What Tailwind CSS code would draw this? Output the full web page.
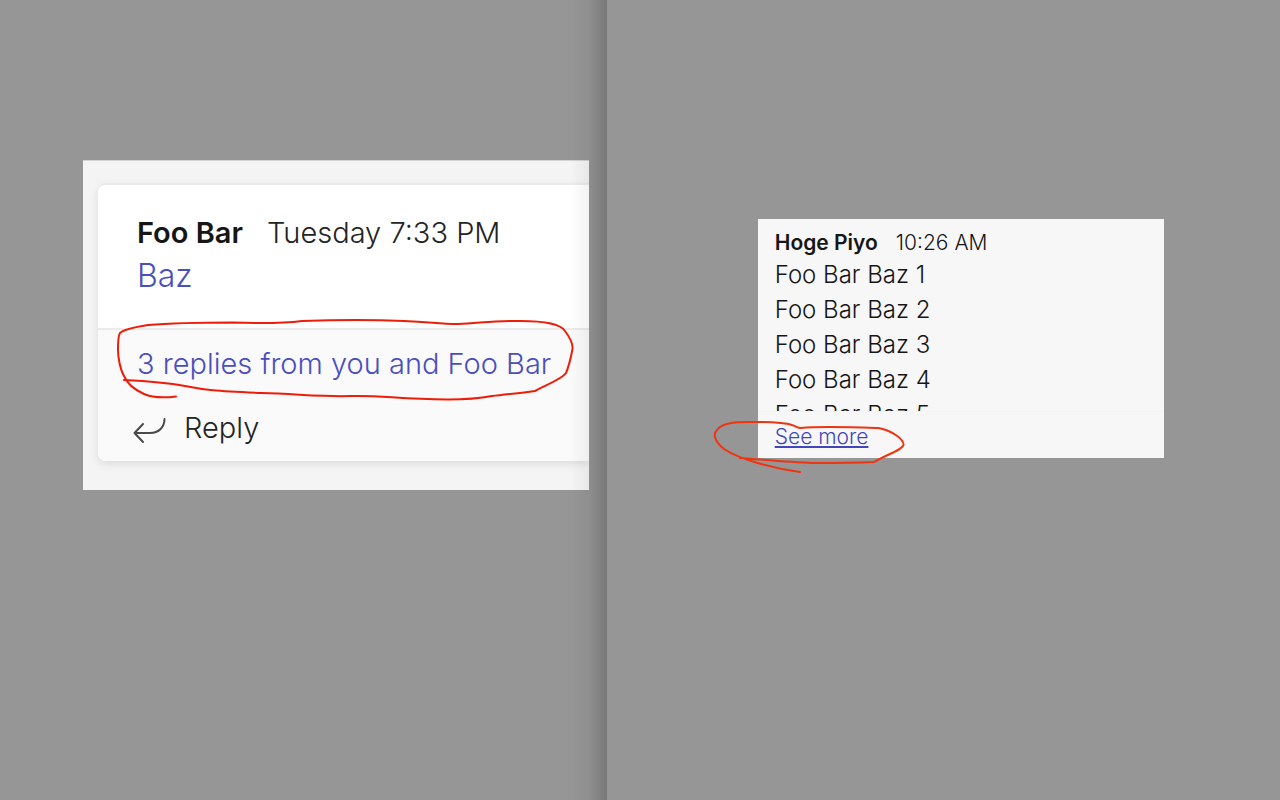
<!DOCTYPE html>
<html lang="en">
<head>
<meta charset="utf-8">
<meta name="viewport" content="width=device-width, initial-scale=1">
<title>Message comparison</title>
<script src="https://cdn.jsdelivr.net/npm/@tailwindcss/browser@4"></script>
</head>
<body class="bg-[#969696] font-['Inter','Liberation_Sans',sans-serif] text-[#242424]">
<main class="flex min-h-screen">
  <section class="relative w-[47.4%] pt-40 pl-[83px] pr-[18px]">
    <div class="overflow-hidden bg-[#f4f4f4] border-t border-[#d2d2d2] pt-[22px] pb-[29px] pl-[15px]">
      <article class="rounded-l-lg border-t-2 border-[#eaeaea] bg-white shadow-[0_3px_8px_rgba(0,0,0,0.10)]">
        <div class="border-b-2 border-[#ebebeb] pt-7 pb-[29px] pl-[39px]">
          <header class="flex gap-6 text-[29px] leading-10 whitespace-nowrap">
            <h2 class="font-semibold text-[#161616]">Foo Bar</h2>
            <time class="font-light">Tuesday 7:33 PM</time>
          </header>
          <a href="#" class="block text-[32px] leading-[46px] font-light text-[#4b4fbd]">Baz</a>
        </div>
        <div class="rounded-bl-lg bg-[#fafafa] pt-[14px] pb-[13px] pl-[39px] text-[29px] leading-10">
          <a href="#" class="block font-light whitespace-nowrap text-[#4b4fbd]">3 replies from you and Foo Bar</a>
          <button type="button" class="-ml-1 mt-6 flex items-center gap-[17px] font-light">
            <svg class="mt-2 h-7 w-[34px]" viewBox="0 0 34 28" fill="none" stroke="#4a4a4a" stroke-width="2" stroke-linecap="round" stroke-linejoin="round" aria-hidden="true"><path d="M10 6 1.500 15 10 24M1.500 15H17C26 15 31.500 9 31.500 1"/></svg>
            Reply
          </button>
        </div>
      </article>
    </div>
    <div class="pointer-events-none absolute inset-y-0 right-0 w-9 bg-linear-to-r from-black/0 via-black/5 to-black/20" aria-hidden="true"></div>
    <svg class="pointer-events-none absolute top-[310px] left-[110px] h-[100px] w-[470px]" viewBox="110 310 470 100" fill="none" stroke="#ee1c08" stroke-width="2" stroke-linecap="round" stroke-linejoin="round" aria-hidden="true"><path d="M176 396.500C164 398 153 398 144 394C135 390 127 383 124 376C120 369 118 357 118 350C118 341 118 336 120 333C123 330 135 327 148 325C172 323 206 322.500 232 322.500C262 323.500 282 323.500 302 321C330 320 370 319.500 404 321C432 322 438 324 458 324C481 323 494 320.500 520 321C542 321 560 323 565 331C571 339 573 345 572.500 349C571 357 569 366 566 373C562 379 548 384 535 391C523 393 506 394 492 396C479 398.500 469 399.500 448 399.500C395 399 383 395 350 396C325 397 297 394 262 393C214 391 205 390 185 386C164 382 146 381 124 380"/></svg>
  </section>
  <section class="min-w-0 flex-1 pt-[219px] pr-[116px] pl-[151px]">
    <article class="relative bg-[#f7f7f7] text-[#161616]">
      <div class="pt-[9px]">
        <header class="flex gap-[18px] px-[17px] text-[21px] leading-[30px] whitespace-nowrap">
          <h2 class="font-semibold">Hoge Piyo</h2>
          <time class="font-light">10:26 AM</time>
        </header>
        <div class="-mt-px h-[154px] overflow-hidden px-[17px] text-2xl leading-[35px] font-light">
          <p>Foo Bar Baz 1</p>
          <p>Foo Bar Baz 2</p>
          <p>Foo Bar Baz 3</p>
          <p>Foo Bar Baz 4</p>
          <p>Foo Bar Baz 5</p>
        </div>
      </div>
      <div class="border-t border-[#f3f3f3] px-[17px] pt-[9px] pb-[5px]">
        <a href="#" class="block text-[21px] leading-8 font-light text-[#4246bd] underline decoration-2 underline-offset-2">See more</a>
      </div>
      <svg class="pointer-events-none absolute top-[196px] -left-12 h-[62px] w-[200px]" viewBox="710 415 200 62" fill="none" stroke="#ee3410" stroke-width="2" stroke-linecap="round" stroke-linejoin="round" aria-hidden="true"><path d="M800 472C777 469 740 460 724 449C714 441 713 434 717 430C723 421 741 422 755 422C770 422 786 423 792 425C796 426 797 428 801 428C820 426 848 427 878 428C891 430 904 439 903.500 445C902 450 888 454 874 462C852 463 836 463 813 463C790 462 765 460 740 458"/></svg>
    </article>
  </section>
</main>
</body>
</html>
